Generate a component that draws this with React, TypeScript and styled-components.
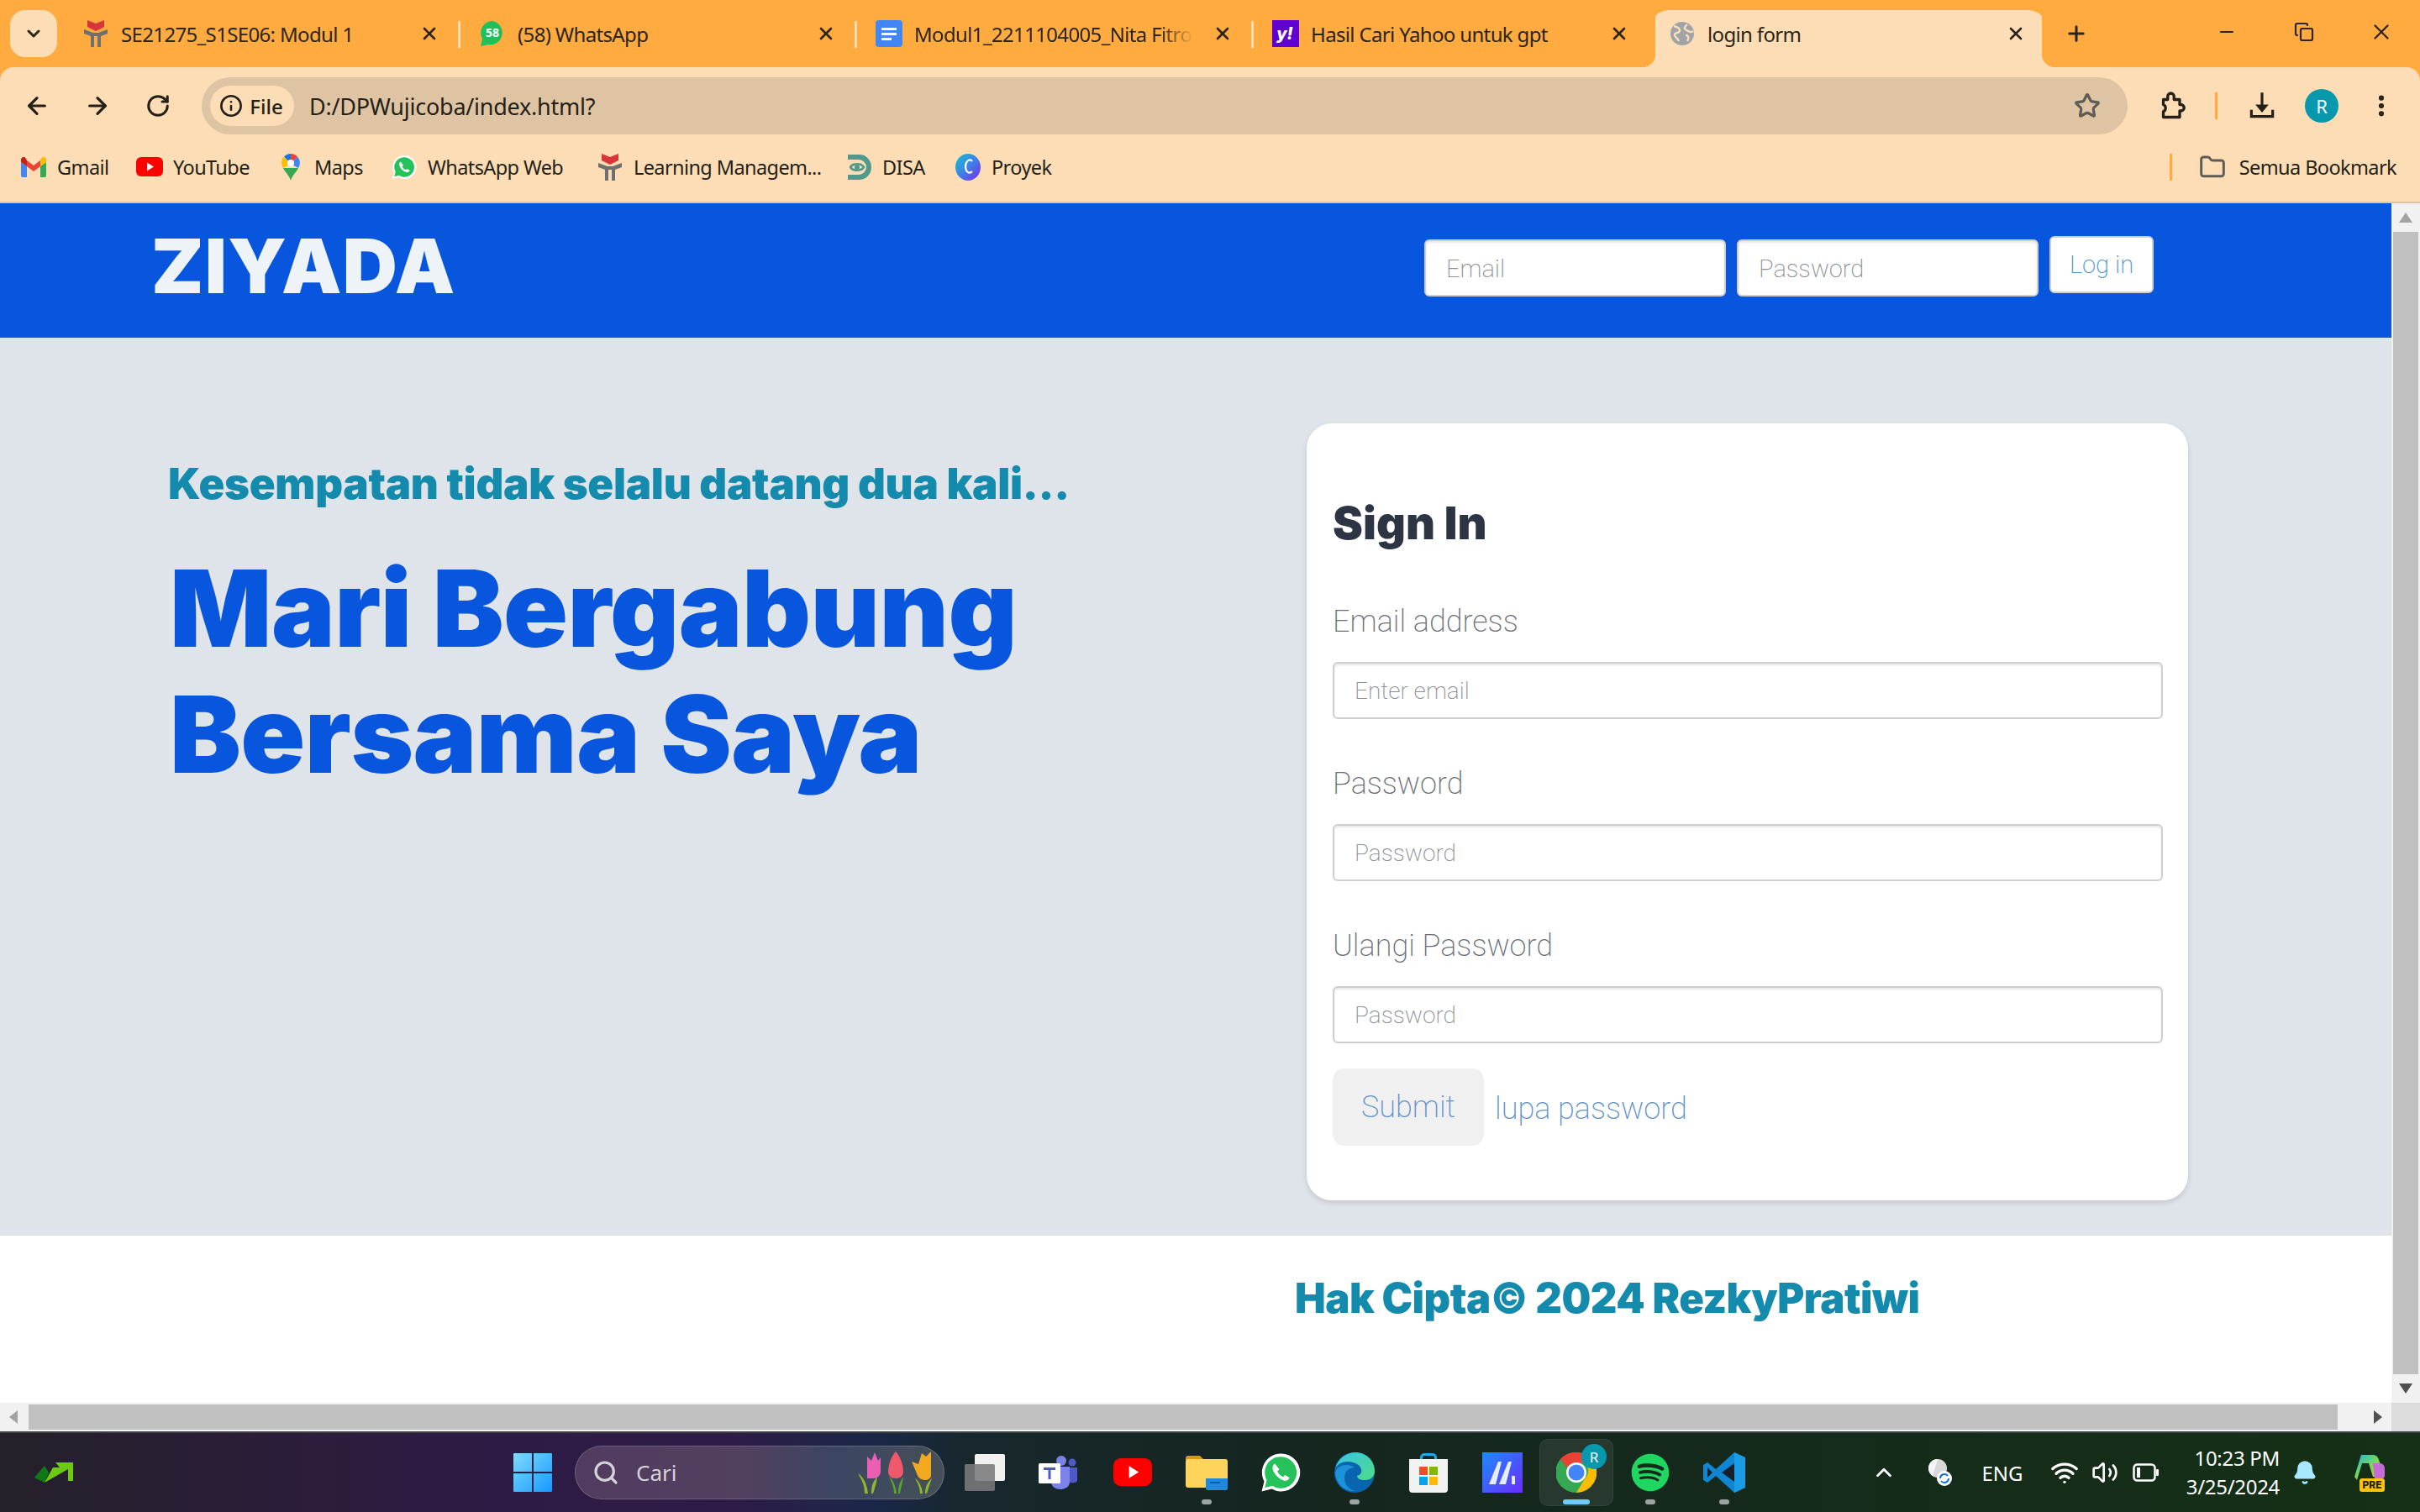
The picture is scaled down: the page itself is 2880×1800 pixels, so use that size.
import React from "react";
import styled, { createGlobalStyle } from "styled-components";
import {
  ArrowLeft, ArrowRight, RotateCw, Star, MoreVertical, Folder,
  X, Plus, Minus, ChevronDown, ChevronUp, Info, Search, Wifi, Volume2, Copy, Bell,
} from "lucide-react";
import { FaSpotify } from "react-icons/fa";

const Global = createGlobalStyle`
  html, body { margin: 0; padding: 0; background: #fff; }
  * { box-sizing: border-box; }
  #root { width: 2880px; height: 1800px; overflow: hidden; }
`;

const UI = `"Noto Sans", "Open Sans", sans-serif`;
const HEAD = `Inter, "Liberation Sans", sans-serif`;
const LIGHT = `Roboto, "Liberation Sans", sans-serif`;

const Screen = styled.div`
  width: 2880px;
  height: 1800px;
  display: flex;
  flex-direction: column;
  font-family: ${UI};
  background: #ffab40;
`;

/* browser tabs */
const TabStrip = styled.div`
  height: 80px;
  display: flex;
  align-items: flex-end;
  padding-left: 12px;
  background: #ffab40;
  color: #2b2418;
`;
const ChevronBtn = styled.div`
  width: 56px;
  height: 56px;
  margin: 0 8px 12px 0;
  border-radius: 18px;
  background: #fdddb5;
  display: flex;
  align-items: center;
  justify-content: center;
`;
const Tab = styled.div<{ $active?: boolean; $sep?: boolean }>`
  position: relative;
  width: 472px;
  height: 68px;
  padding: 0 0 12px 22px;
  display: flex;
  align-items: center;
  gap: 14px;
  font-size: 24px;
  ${(p) => p.$sep && `
    &::after {
      content: "";
      position: absolute;
      right: 0;
      top: 13px;
      width: 3px;
      height: 32px;
      background: #fdddb5;
    }
  `}
  ${(p) => p.$active && `
    margin: 0;
    background: linear-gradient(90deg, transparent 6px, #fdddb5 6px, #fdddb5 466px, transparent 466px);
    border-radius: 22px 22px 0 0;
    &::before {
      content: "";
      position: absolute;
      left: -10px;
      bottom: 0;
      width: 16px;
      height: 16px;
      background: radial-gradient(circle at 0 0, transparent 16px, #fdddb5 16.5px);
    }
    &::after {
      content: "";
      position: absolute;
      right: -10px;
      bottom: 0;
      width: 16px;
      height: 16px;
      background: radial-gradient(circle at 100% 0, transparent 16px, #fdddb5 16.5px);
    }
  `}
`;
const Favicon = styled.span`
  width: 32px;
  height: 32px;
  flex: none;
  display: flex;
  align-items: center;
  justify-content: center;
`;
const TabTitle = styled.span<{ $fade?: boolean }>`
  width: 332px;
  flex: none;
  white-space: nowrap;
  letter-spacing: -0.65px;
  ${(p) => p.$fade && `-webkit-mask-image: linear-gradient(90deg, #000 88%, transparent 100%);`}
`;
const TabClose = styled.span`
  width: 24px;
  height: 24px;
  flex: none;
  margin-left: 9px;
  display: flex;
  align-items: center;
  justify-content: center;
`;
const NewTab = styled.div`
  width: 48px;
  height: 56px;
  margin: 0 0 12px 11px;
  display: flex;
  align-items: center;
  justify-content: center;
`;
const WindowControls = styled.div`
  margin-left: auto;
  display: flex;
  height: 80px;
  align-items: center;
  padding-bottom: 4px;
`;
const WinBtn = styled.div`
  width: 92px;
  display: flex;
  justify-content: center;
`;

/* toolbar */
const Toolbar = styled.div`
  height: 92px;
  padding: 12px 0 12px 8px;
  display: flex;
  align-items: center;
  background: #fdddb5;
  border-radius: 16px 16px 0 0;
  color: #241f17;
`;
const ToolBtn = styled.div<{ $ml?: number; $w?: number }>`
  width: ${(p) => p.$w ?? 72}px;
  margin-left: ${(p) => p.$ml ?? 0}px;
  height: 56px;
  flex: none;
  display: flex;
  align-items: center;
  justify-content: center;
`;
const Omnibox = styled.div`
  width: 2292px;
  height: 68px;
  margin-left: 16px;
  border-radius: 34px;
  padding: 0 0 0 10px;
  background: #dec4a2;
  display: flex;
  align-items: center;
`;
const SiteChip = styled.div`
  width: 100px;
  height: 48px;
  border-radius: 24px;
  background: #fdddb5;
  display: flex;
  align-items: center;
  justify-content: center;
  gap: 8px;
  padding-right: 2px;
  font-size: 24px;
  font-weight: 500;
`;
const Url = styled.div`
  margin-left: 18px;
  font-size: 27px;
  letter-spacing: -0.25px;
`;
const StarSlot = styled.div`
  margin-left: auto;
  margin-right: 20px;
  width: 56px;
  display: flex;
  justify-content: center;
`;
const ToolSep = styled.div<{ $ml: number; $h: number }>`
  width: 3px;
  height: ${(p) => p.$h}px;
  margin-left: ${(p) => p.$ml}px;
  background: #ffab40;
  flex: none;
`;
const Avatar = styled.div<{ $size: number; $font: number }>`
  width: ${(p) => p.$size}px;
  height: ${(p) => p.$size}px;
  border-radius: 50%;
  background: #0798ae;
  color: #fff;
  display: flex;
  align-items: center;
  justify-content: center;
  font-size: ${(p) => p.$font}px;
`;

/* bookmarks */
const BookmarkBar = styled.div`
  height: 70px;
  padding: 0 0 14px 24px;
  display: flex;
  align-items: center;
  background: #fdddb5;
  font-size: 23.5px;
  color: #241f17;
  border-bottom: 2px solid #dec4a2;
`;
const Bookmark = styled.div<{ $w?: number; $gap?: number }>`
  width: ${(p) => (p.$w ? `${p.$w}px` : "auto")};
  flex: none;
  display: flex;
  align-items: center;
  gap: ${(p) => p.$gap ?? 12}px;
  white-space: nowrap;
  letter-spacing: -0.6px;
`;
const BookmarkRight = styled.div`
  margin-left: auto;
  display: flex;
  align-items: center;
  padding-right: 28px;
`;

/* the page in the viewport */
const Viewport = styled.div`
  height: 1462px;
  display: grid;
  grid-template-columns: 1fr 34px;
  grid-template-rows: 1428px 34px;
  background: #fff;
`;
const Page = styled.div`
  display: flex;
  flex-direction: column;
  min-width: 0;
`;
const Header = styled.header`
  height: 160px;
  flex: none;
  background: #0855de;
  display: flex;
  padding-left: 180px;
`;
const Logo = styled.div`
  font-family: ${HEAD};
  font-weight: 900;
  font-size: 90px;
  line-height: 160px;
  height: 160px;
  color: #eef3f7;
  letter-spacing: 1.3px;
  margin-top: -5px;
`;
const HeaderForm = styled.form`
  margin-left: auto;
  margin-right: 283px;
  display: flex;
  gap: 13px;
  padding-top: 43px;
`;
const baseInput = `
  border: 2px solid #cfcfcf;
  border-radius: 6px;
  background: #fff;
  box-shadow: inset 0 2px 3px rgba(0,0,0,.1);
  font-family: ${LIGHT};
  font-weight: 200;
  outline: none;
  &::placeholder { color: #8d9196; opacity: 1; }
`;
const HeaderInput = styled.input`
  ${baseInput}
  width: 359px;
  height: 68px;
  padding: 2px 24px 0;
  font-size: 29px;
`;
const HeaderButton = styled.button`
  width: 124px;
  height: 68px;
  margin-top: -4px;
  border: 2px solid #cfcfcf;
  border-radius: 6px;
  background: #fff;
  color: #4c93d0;
  font-family: ${LIGHT};
  font-weight: 200;
  font-size: 29px;
  padding: 0;
`;
const Main = styled.main`
  height: 1069px;
  flex: none;
  background: #dfe3ea;
  display: grid;
  grid-template-columns: 1555px 1049px;
  padding-top: 102px;
`;
const Hero = styled.div`
  padding: 37px 0 0 200px;
  font-family: ${HEAD};
`;
const HeroSub = styled.h3`
  margin: 0;
  font-size: 51px;
  line-height: 70px;
  font-weight: 900;
  color: #148bac;
  letter-spacing: -0.3px;
  white-space: nowrap;
`;
const HeroTitle = styled.h1`
  margin: 38px 0 0 2px;
  font-size: 127px;
  line-height: 150px;
  font-weight: 900;
  color: #0855de;
  letter-spacing: -0.5px;
`;
const Card = styled.form`
  height: 925px;
  background: #fff;
  border-radius: 30px;
  padding: 82px 31px 0;
  box-shadow: 0 3px 6px rgba(0, 0, 0, 0.12);
`;
const CardTitle = styled.h2`
  margin: 0 0 59px;
  font-family: ${HEAD};
  font-size: 54px;
  line-height: 74px;
  font-weight: 900;
  color: #2d3444;
`;
const Field = styled.div`
  margin-bottom: 56px;
`;
const FieldLabel = styled.label`
  display: block;
  font-family: ${LIGHT};
  font-weight: 200;
  font-size: 36px;
  line-height: 42px;
  color: #6c7076;
  margin-bottom: 27px;
`;
const FieldInput = styled.input`
  ${baseInput}
  display: block;
  width: 988px;
  height: 68px;
  padding: 0 24px;
  font-size: 28px;
`;
const Actions = styled.div`
  display: flex;
  align-items: center;
  gap: 13px;
  margin-top: -26px;
`;
const SubmitBtn = styled.button`
  width: 180px;
  height: 92px;
  border: none;
  border-radius: 14px;
  background: #f0f0f0;
  color: #5f93c9;
  font-family: ${LIGHT};
  font-weight: 200;
  font-size: 36px;
  padding: 0;
`;
const ForgotLink = styled.a`
  font-family: ${LIGHT};
  font-weight: 200;
  font-size: 36px;
  color: #5f93c9;
  padding-top: 4px;
`;
const Footer = styled.footer`
  flex: 1;
  background: #fff;
  padding: 40px 0 0 1541px;
`;
const FooterText = styled.h3`
  margin: 0;
  font-family: ${HEAD};
  font-size: 49px;
  line-height: 70px;
  font-weight: 900;
  color: #148bac;
  letter-spacing: -0.5px;
  white-space: nowrap;
`;
const VScroll = styled.div`
  background: #f1f1f1;
  display: flex;
  flex-direction: column;
  align-items: center;
`;
const ScrollArrow = styled.div`
  height: 34px;
  width: 100%;
  flex: none;
  display: flex;
  align-items: center;
  justify-content: center;
`;
const VThumb = styled.div`
  width: 30px;
  flex: 1;
  background: #c1c1c1;
`;
const HScroll = styled.div`
  background: #f1f1f1;
  display: flex;
  align-items: center;
`;
const HThumb = styled.div`
  height: 30px;
  flex: 1;
  background: #c1c1c1;
`;
const HArrow = styled.div<{ $w: number; $pl?: number }>`
  width: ${(p) => p.$w}px;
  padding-left: ${(p) => p.$pl ?? 0}px;
  flex: none;
  display: flex;
  justify-content: center;
`;
const ScrollCorner = styled.div`
  background: #dcdcdc;
`;

/* windows taskbar */
const Taskbar = styled.div`
  flex: 1;
  display: flex;
  align-items: center;
  color: #fff;
  background: linear-gradient(90deg, #252029 0, #2e1b45 20%, #2e1b47 30%, #1b2748 36%, #17272c 40%, #15261f 55%, #153016 100%);
  border-top: 2px solid #3e4246;
`;
const WidgetSlot = styled.div`
  width: 128px;
  flex: none;
  display: flex;
  justify-content: center;
`;
const StartSlot = styled.div`
  width: 88px;
  margin-left: 462px;
  flex: none;
  display: flex;
  justify-content: center;
`;
const SearchPill = styled.div`
  width: 440px;
  height: 64px;
  margin: 0 4px 0 6px;
  flex: none;
  border-radius: 32px;
  border: 1px solid rgba(255, 255, 255, 0.18);
  background: linear-gradient(90deg, #523b60, #52405f 45%, #3c4562 70%, #455058);
  display: flex;
  align-items: center;
  padding: 0 10px 0 20px;
  font-size: 26px;
  color: #d5d2da;
  gap: 20px;
`;
const Tulips = styled.svg`
  margin-left: auto;
`;
const AppSlot = styled.div<{ $run?: boolean; $active?: boolean }>`
  position: relative;
  width: 88px;
  height: 80px;
  flex: none;
  display: flex;
  align-items: center;
  justify-content: center;
  border-radius: 10px;
  ${(p) => p.$active && `background: rgba(255,255,255,.08); box-shadow: inset 0 0 0 1px rgba(255,255,255,.05);`}
  ${(p) => p.$run && `
    &::after {
      content: "";
      position: absolute;
      left: 38px;
      bottom: 2px;
      width: 12px;
      height: 6px;
      border-radius: 3px;
      background: #9ea3a3;
    }
  `}
  ${(p) => p.$active && `
    &::after {
      content: "";
      position: absolute;
      left: 28px;
      bottom: 2px;
      width: 32px;
      height: 6px;
      border-radius: 3px;
      background: #6fcdfa;
    }
  `}
`;
const ChromeBadge = styled.div`
  position: absolute;
  top: 6px;
  right: 8px;
`;
const Tray = styled.div`
  margin-left: auto;
  display: flex;
  align-items: center;
  padding-right: 19px;
  font-size: 24px;
`;
const TraySlot = styled.div<{ $w: number }>`
  width: ${(p) => p.$w}px;
  flex: none;
  display: flex;
  justify-content: center;
`;
const Clock = styled.div`
  width: 140px;
  text-align: right;
  line-height: 34px;
  letter-spacing: -0.3px;
`;

/* icons */
const TelkomIcon = () => (
  <svg width="28" height="32" viewBox="0 0 28 32">
    <path d="M4 0l10 4 10-4v8l-10 5L4 8z" fill="#d8343a" />
    <path d="M0 11l11 4h6l11-4v5l-8 3v13h-4V19h-4v13H8V19l-8-3z" fill="#6f6f6f" />
  </svg>
);
const WhatsBadge = () => (
  <svg width="30" height="32" viewBox="0 0 30 32">
    <path d="M15 1a14 14 0 0 0-12 21L1 31l9-2A14 14 0 1 0 15 1z" fill="#1fbf5b" />
    <text x="15" y="20" fontSize="14" fontWeight="700" fill="#fff" textAnchor="middle" fontFamily="Noto Sans">58</text>
  </svg>
);
const DocIcon = () => (
  <svg width="32" height="32" viewBox="0 0 32 32">
    <rect width="32" height="32" rx="4" fill="#4285f4" />
    <path d="M7 9h18v3H7zM7 15h18v3H7zM7 21h12v3H7z" fill="#fff" />
  </svg>
);
const YahooIcon = () => (
  <svg width="32" height="32" viewBox="0 0 32 32">
    <rect width="32" height="32" fill="#6001d2" />
    <text x="15" y="23" fontSize="20" fontWeight="800" fill="#fff" textAnchor="middle" fontFamily="Inter" fontStyle="italic">y!</text>
  </svg>
);
const GlobeIcon = () => (
  <svg width="28" height="28" viewBox="0 0 28 28">
    <circle cx="14" cy="14" r="14" fill="#a0a4a9" />
    <path d="M4 5c4 1 8 3 7 6s-5 1-6 4 4 4 5 8M20 3c-3 3-5 5-1 7s5 3 8 1M18 16c4 0 4 4 2 7" stroke="#fdddb5" strokeWidth="2.4" fill="none" />
  </svg>
);
const GmailIcon = () => (
  <svg width="30" height="24" viewBox="0 0 30 24">
    <path d="M2 24h5V11L0 6v16a2 2 0 0 0 2 2z" fill="#4285f4" />
    <path d="M23 24h5a2 2 0 0 0 2-2V6l-7 5z" fill="#34a853" />
    <path d="M23 4v7l7-5V3c0-2.500-3-4-5-2.500z" fill="#fbbc04" />
    <path d="M7 11V4l8 6 8-6v7l-8 6z" fill="#ea4335" />
    <path d="M0 3v3l7 5V4L5 .5C3-1 0 .5 0 3z" fill="#c5221f" />
  </svg>
);
const YoutubeIcon = ({ size = 32 }: { size?: number }) => (
  <svg width={size} height={size * 0.72} viewBox="0 0 32 23">
    <rect width="32" height="23" rx="6" fill="#ff0000" />
    <path d="M13 6.500l8 5-8 5z" fill="#fff" />
  </svg>
);
const MapsIcon = () => (
  <svg width="22" height="32" viewBox="0 0 22 32">
    <path d="M11 0a11 11 0 0 1 8 3.500L11 12z" fill="#ea4335" />
    <path d="M19 3.500A11 11 0 0 1 20 17L11 12z" fill="#4285f4" />
    <path d="M3 3.500A11 11 0 0 1 11 0v12z" fill="#1a73e8" />
    <path d="M3 3.500L11 12l-9 5A11 11 0 0 1 3 3.500z" fill="#fbbc04" />
    <path d="M2 17l18 0c-2 5-7 8-9 15-2-7-7-10-9-15z" fill="#34a853" />
    <circle cx="11" cy="11" r="4" fill="#fff" />
  </svg>
);
const WhatsRound = ({ size }: { size: number }) => (
  <svg width={size} height={size} viewBox="0 0 32 32">
    <path d="M16 1a15 15 0 0 0-13 22L1 31l8-2A15 15 0 1 0 16 1z" fill="#fff" />
    <path d="M16 3.500a12.500 12.500 0 0 0-11 18.500l-1.500 6 6-1.500A12.500 12.500 0 1 0 16 3.500z" fill="#25c15a" />
    <path d="M11.500 9c-1 .2-2 2-1.800 4 .3 3 4.800 8.500 9.300 9.500 2 .4 3.700-1 4-2.500l-3.500-2-1.500 1.500c-2-.6-4-3-4.500-4.500L15 13.500z" fill="#fff" />
  </svg>
);
const DisaIcon = () => (
  <svg width="30" height="30" viewBox="0 0 30 30">
    <path d="M2 0h14a14 15 0 0 1 0 30H2v-6h13a9 9 0 0 0 0-18H2z" fill="#4f9a8a" />
    <path d="M5 15c3-5 13-5 16 0-3 5-13 5-16 0z" fill="none" stroke="#4f9a8a" strokeWidth="2.500" />
    <circle cx="13" cy="15" r="3" fill="#4f9a8a" />
  </svg>
);
const ProyekIcon = () => (
  <svg width="30" height="32" viewBox="0 0 30 32">
    <defs>
      <linearGradient id="proyekGrad" x1="0" y1="0" x2="1" y2="1">
        <stop offset="0" stopColor="#10c5c9" />
        <stop offset=".5" stopColor="#3f80e8" />
        <stop offset="1" stopColor="#7d2ae8" />
      </linearGradient>
    </defs>
    <ellipse cx="15" cy="16" rx="15" ry="16" fill="url(#proyekGrad)" />
    <path d="M20 9c-3-4-8 0-8 6s4 10 8 6" fill="none" stroke="#fff" strokeWidth="2.200" />
  </svg>
);
const ExtensionIcon = () => (
  <svg width="36" height="36" viewBox="0 0 24 24" fill="none" stroke="#241f17" strokeWidth="2.200" strokeLinejoin="round">
    <path d="M5 7h3.500V4.500a2.500 2.500 0 0 1 5 0V7H18v4h1a2.500 2.500 0 0 1 0 5h-1v5H5v-4.500a3 3 0 0 0 0-5.500z" />
  </svg>
);
const DownloadIcon = () => (
  <svg width="38" height="38" viewBox="0 0 24 24" fill="#241f17">
    <path d="M11 2h2v9h4l-5 6-5-6h4z" />
    <path d="M3 15h2v4h14v-4h2v6H3z" />
  </svg>
);
const WidgetIcon = () => (
  <svg width="46" height="28" viewBox="0 0 46 28">
    <path d="M0 20L12 6l5 8L12 26z" fill="#0f7a15" />
    <path d="M12 26l10-18 8 0-5-6h21v22h-6V10z" fill="#6dcb0b" />
  </svg>
);
const StartIcon = () => (
  <svg width="46" height="46" viewBox="0 0 46 46">
    <defs>
      <linearGradient id="startGrad" x1="0" y1="0" x2="1" y2="1">
        <stop offset="0" stopColor="#7fdcfb" />
        <stop offset="1" stopColor="#1598ff" />
      </linearGradient>
    </defs>
    <path d="M0 1a1 1 0 0 1 1-1h21v22H0zM24 0h21a1 1 0 0 1 1 1v21H24zM0 24h22v22H1a1 1 0 0 1-1-1zM24 24h22v21a1 1 0 0 1-1 1H24z" fill="url(#startGrad)" />
  </svg>
);
const TaskViewIcon = () => (
  <svg width="48" height="44" viewBox="0 0 48 44">
    <rect x="12" y="0" width="36" height="32" rx="2" fill="#f1f1f1" />
    <rect x="0" y="12" width="36" height="32" rx="2" fill="#7a7a7a" fillOpacity=".88" />
  </svg>
);
const TeamsIcon = () => (
  <svg width="48" height="42" viewBox="0 0 48 42">
    <circle cx="27" cy="7" r="6" fill="#7b83eb" />
    <circle cx="40" cy="9" r="4.500" fill="#5059c9" />
    <path d="M33 15h13v15c0 4-6 4-13 2z" fill="#5059c9" />
    <path d="M15 14h22v18c0 12-22 12-22 0z" fill="#7b83eb" />
    <rect x="0" y="10" width="26" height="24" rx="1.500" fill="#fff" />
    <path d="M6 15h14v3h-5.500v11h-3V18H6z" fill="#5059c9" />
  </svg>
);
const FolderAppIcon = () => (
  <svg width="50" height="42" viewBox="0 0 50 42">
    <path d="M0 4a3 3 0 0 1 3-3h14l5 5H0z" fill="#d59a0e" />
    <rect y="5" width="50" height="34" rx="3" fill="#ffd45c" />
    <path d="M24 28h26v12a2 2 0 0 1-2 2H26a2 2 0 0 1-2-2z" fill="#1d8ae0" />
    <path d="M29 32h12v2H29z" fill="#0c5da8" />
  </svg>
);
const EdgeIcon = () => (
  <svg width="48" height="48" viewBox="0 0 48 48">
    <defs>
      <linearGradient id="edgeGrad" x1="0" y1="0" x2="1" y2="1">
        <stop offset="0" stopColor="#36c5e8" />
        <stop offset="1" stopColor="#4fdc85" />
      </linearGradient>
    </defs>
    <circle cx="24" cy="24" r="24" fill="#0a65b0" />
    <path d="M1 20C4 6 16 0 25 0c13 0 23 10 23 22 0 8-6 11-12 11-5 0-9-2-9-5 4-1 6-4 5-8C30 10 6 6 1 20z" fill="url(#edgeGrad)" />
    <path d="M24 18c-7 0-12 5-12 13 0 6 4 13 13 15C15 47 2 40 1 24 3 16 14 12 24 18z" fill="#1c93d8" />
  </svg>
);
const StoreIcon = () => (
  <svg width="46" height="48" viewBox="0 0 46 48">
    <path d="M13 9V6a5 5 0 0 1 5-5h10a5 5 0 0 1 5 5v3h-3V6a2 2 0 0 0-2-2H18a2 2 0 0 0-2 2v3z" fill="#1fa8e8" />
    <path d="M0 8h46v36a4 4 0 0 1-4 4H4a4 4 0 0 1-4-4z" fill="#f2f2f2" />
    <rect x="12" y="17" width="10" height="10" fill="#f25022" />
    <rect x="24" y="17" width="10" height="10" fill="#7fba00" />
    <rect x="12" y="29" width="10" height="10" fill="#00a4ef" />
    <rect x="24" y="29" width="10" height="10" fill="#ffb900" />
  </svg>
);
const MaxIcon = () => (
  <svg width="48" height="48" viewBox="0 0 48 48">
    <defs>
      <linearGradient id="maxGrad" x1="0" y1="0" x2="1" y2="1">
        <stop offset="0" stopColor="#1a8cff" />
        <stop offset="1" stopColor="#6b2cff" />
      </linearGradient>
    </defs>
    <rect width="48" height="48" fill="url(#maxGrad)" />
    <path d="M8 38L19 11h4L16 38zM20 38L31 11h4L28 38z" fill="#e8ecff" />
    <rect x="35" y="28" width="4" height="10" fill="#e8ecff" />
  </svg>
);
const ChromeIcon = () => (
  <svg width="48" height="48" viewBox="0 0 48 48">
    <circle cx="24" cy="24" r="24" fill="#34a853" />
    <path d="M24 0a24 24 0 0 1 21 12H24a12 12 0 0 0-11 7L5 8A24 24 0 0 1 24 0z" fill="#ea4335" />
    <path d="M45 12a24 24 0 0 1-21 36l11-18a12 12 0 0 0-2-18z" fill="#fbbc04" />
    <path d="M5 8l8 11a12 12 0 0 0 11 17l-4 11.500A24 24 0 0 1 5 8z" fill="#34a853" />
    <circle cx="24" cy="24" r="12" fill="#fff" />
    <circle cx="24" cy="24" r="9.500" fill="#4285f4" />
  </svg>
);
const VsCodeIcon = () => (
  <svg width="50" height="48" viewBox="0 0 50 48">
    <path d="M37 0l13 6v36l-13 6-22-20L5 36l-5-3V15l5-3 10 8z" fill="#0e86d4" />
    <path d="M37 0l13 6v36l-13 6z" fill="#1a9be6" />
    <path d="M37 13L22 24l15 11z" fill="#15202b" />
    <path d="M5 18v12l6-6z" fill="#15202b" />
  </svg>
);
const OneDriveIcon = () => (
  <svg width="30" height="34" viewBox="0 0 30 34">
    <circle cx="13" cy="12" r="11" fill="#d8d8d8" />
    <path d="M13 1a11 11 0 0 0-11 11c0 4 2 7 5 9z" fill="#f5f5f5" />
    <circle cx="21" cy="24" r="9" fill="#fff" />
    <path d="M16 24a5 5 0 0 1 9-3M26 24a5 5 0 0 1-9 3" stroke="#1874d0" strokeWidth="2" fill="none" />
  </svg>
);
const BatteryIcon = () => (
  <svg width="32" height="22" viewBox="0 0 32 22">
    <rect x="1.500" y="1.500" width="25" height="19" rx="4" fill="none" stroke="#fff" strokeWidth="2.500" />
    <rect x="5" y="5" width="4" height="12" fill="#fff" />
    <rect x="28" y="7" width="3" height="8" rx="1" fill="#fff" />
  </svg>
);
const CopilotIcon = () => (
  <svg width="46" height="46" viewBox="0 0 46 46">
    <defs>
      <linearGradient id="copilotGrad" x1="0" y1="0" x2="1" y2="1">
        <stop offset="0" stopColor="#1cb5e8" />
        <stop offset=".5" stopColor="#7fd94c" />
        <stop offset="1" stopColor="#f2c230" />
      </linearGradient>
    </defs>
    <path d="M8 28L16 2h14c3 0 6 2 7 6l7 20H30L25 12h-8l-6 20z" fill="url(#copilotGrad)" />
    <path d="M30 12h8c4 0 6 3 6 7v6c0 5-3 7-8 7h-4z" fill="#c56cd6" />
    <rect x="14" y="30" width="30" height="16" rx="3" fill="#ffc20e" />
    <text x="29" y="42" fontSize="12" fontWeight="800" fill="#222" textAnchor="middle" fontFamily="Inter">PRE</text>
  </svg>
);
const TulipsArt = () => (
  <Tulips width="94" height="50" viewBox="0 0 94 50">
    <path d="M10 50c0-12-5-18-8-24 6 4 10 10 12 24zM18 50c0-10 2-14 7-20-1 8-3 14-5 20z" fill="#8fb82a" />
    <path d="M13 32V6l5 5 4-10 4 10 3-4v17c0 5-5 8-8 8s-8-0-8-0z" fill="#ea5fb4" />
    <path d="M45 50c0-8-4-16-6-20 5 3 8 12 9 20zM50 50c0-8 2-14 6-20-1 8-3 14-4 20z" fill="#5aa62b" />
    <path d="M38 24c0-10 5-20 9-24 4 4 9 14 9 24 0 5-4 8-9 8s-9-3-9-8z" fill="#f0596c" />
    <path d="M76 50c0-8-4-14-6-18 5 3 8 10 9 18zM82 50c0-8 3-14 8-18-3 8-4 12-6 18z" fill="#8fb82a" />
    <path d="M66 12l8 3 4-13 5 4 6-6v28c0 4-4 6-7 6-6 0-9-4-10-8z" fill="#f3a91f" />
  </Tulips>
);

const bookmarks = [
  { icon: <GmailIcon />, label: "Gmail", w: 138 },
  { icon: <YoutubeIcon />, label: "YouTube", w: 168 },
  { icon: <MapsIcon />, label: "Maps", w: 135 },
  { icon: <WhatsRound size={30} />, label: "WhatsApp Web", w: 245 },
  { icon: <TelkomIcon />, label: "Learning Managem...", w: 296 },
  { icon: <DisaIcon />, label: "DISA", w: 130 },
  { icon: <ProyekIcon />, label: "Proyek", w: 0 },
];

const formFields = [
  { label: "Email address", placeholder: "Enter email", type: "email" },
  { label: "Password", placeholder: "Password", type: "password" },
  { label: "Ulangi Password", placeholder: "Password", type: "password" },
];

export default function App() {
  return (
    <Screen>
      <Global />
      <TabStrip>
        <ChevronBtn><ChevronDown size={24} strokeWidth={3} /></ChevronBtn>
        <Tab $sep>
          <Favicon><TelkomIcon /></Favicon>
          <TabTitle>SE21275_S1SE06: Modul 1</TabTitle>
          <TabClose><X size={24} strokeWidth={2.6} /></TabClose>
        </Tab>
        <Tab $sep>
          <Favicon><WhatsBadge /></Favicon>
          <TabTitle>(58) WhatsApp</TabTitle>
          <TabClose><X size={24} strokeWidth={2.6} /></TabClose>
        </Tab>
        <Tab $sep>
          <Favicon><DocIcon /></Favicon>
          <TabTitle $fade>Modul1_2211104005_Nita Fitro</TabTitle>
          <TabClose><X size={24} strokeWidth={2.6} /></TabClose>
        </Tab>
        <Tab>
          <Favicon><YahooIcon /></Favicon>
          <TabTitle>Hasil Cari Yahoo untuk gpt</TabTitle>
          <TabClose><X size={24} strokeWidth={2.6} /></TabClose>
        </Tab>
        <Tab $active>
          <Favicon><GlobeIcon /></Favicon>
          <TabTitle>login form</TabTitle>
          <TabClose><X size={24} strokeWidth={2.6} /></TabClose>
        </Tab>
        <NewTab><Plus size={28} strokeWidth={2.6} /></NewTab>
        <WindowControls>
          <WinBtn><Minus size={24} strokeWidth={2} /></WinBtn>
          <WinBtn><Copy size={24} strokeWidth={2.2} /></WinBtn>
          <WinBtn><X size={30} strokeWidth={1.8} /></WinBtn>
        </WindowControls>
      </TabStrip>

      <Toolbar>
        <ToolBtn><ArrowLeft size={32} strokeWidth={2.4} /></ToolBtn>
        <ToolBtn><ArrowRight size={32} strokeWidth={2.4} /></ToolBtn>
        <ToolBtn><RotateCw size={30} strokeWidth={2.4} /></ToolBtn>
        <Omnibox>
          <SiteChip><Info size={28} strokeWidth={2.2} />File</SiteChip>
          <Url>D:/DPWujicoba/index.html?</Url>
          <StarSlot><Star size={32} strokeWidth={2.4} color="#5f5b55" /></StarSlot>
        </Omnibox>
        <ToolBtn $ml={17}><ExtensionIcon /></ToolBtn>
        <ToolSep $ml={15} $h={32} />
        <ToolBtn $ml={17}><DownloadIcon /></ToolBtn>
        <ToolBtn $w={70}><Avatar $size={40} $font={22}>R</Avatar></ToolBtn>
        <ToolBtn><MoreVertical size={32} strokeWidth={2.6} /></ToolBtn>
      </Toolbar>

      <BookmarkBar>
        {bookmarks.map((b) => (
          <Bookmark key={b.label} $w={b.w || undefined}>
            <Favicon>{b.icon}</Favicon>
            {b.label}
          </Bookmark>
        ))}
        <BookmarkRight>
          <ToolSep $ml={0} $h={32} />
          <Bookmark $gap={16}>
            <ToolBtn $ml={32} $w={32}><Folder size={34} strokeWidth={2.2} color="#5f5b55" /></ToolBtn>
            Semua Bookmark
          </Bookmark>
        </BookmarkRight>
      </BookmarkBar>

      <Viewport>
        <Page>
          <Header>
            <Logo>ZIYADA</Logo>
            <HeaderForm>
              <HeaderInput placeholder="Email" />
              <HeaderInput placeholder="Password" type="password" />
              <HeaderButton type="button">Log in</HeaderButton>
            </HeaderForm>
          </Header>
          <Main>
            <Hero>
              <HeroSub>Kesempatan tidak selalu datang dua kali...</HeroSub>
              <HeroTitle>Mari Bergabung<br />Bersama Saya</HeroTitle>
            </Hero>
            <Card>
              <CardTitle>Sign In</CardTitle>
              {formFields.map((f) => (
                <Field key={f.label}>
                  <FieldLabel>{f.label}</FieldLabel>
                  <FieldInput placeholder={f.placeholder} type={f.type} />
                </Field>
              ))}
              <Actions>
                <SubmitBtn type="button">Submit</SubmitBtn>
                <ForgotLink>lupa password</ForgotLink>
              </Actions>
            </Card>
          </Main>
          <Footer>
            <FooterText>Hak Cipta© 2024 RezkyPratiwi</FooterText>
          </Footer>
        </Page>
        <VScroll>
          <ScrollArrow><svg width="18" height="14" viewBox="0 0 18 14"><path d="M9 1l8 12H1z" fill="#a3a3a3" /></svg></ScrollArrow>
          <VThumb />
          <ScrollArrow><svg width="18" height="14" viewBox="0 0 18 14"><path d="M9 13L1 1h16z" fill="#505050" /></svg></ScrollArrow>
        </VScroll>
        <HScroll>
          <HArrow $w={34}><svg width="14" height="18" viewBox="0 0 14 18"><path d="M1 9l10-8v16z" fill="#a3a3a3" /></svg></HArrow>
          <HThumb />
          <HArrow $w={64} $pl={30}><svg width="14" height="18" viewBox="0 0 14 18"><path d="M13 9L3 1v16z" fill="#505050" /></svg></HArrow>
        </HScroll>
        <ScrollCorner />
      </Viewport>

      <Taskbar>
        <WidgetSlot><WidgetIcon /></WidgetSlot>
        <StartSlot><StartIcon /></StartSlot>
        <SearchPill>
          <Search size={32} strokeWidth={2.4} />
          Cari
          <TulipsArt />
        </SearchPill>
        <AppSlot><TaskViewIcon /></AppSlot>
        <AppSlot><TeamsIcon /></AppSlot>
        <AppSlot><YoutubeIcon size={46} /></AppSlot>
        <AppSlot $run><FolderAppIcon /></AppSlot>
        <AppSlot><WhatsRound size={48} /></AppSlot>
        <AppSlot $run><EdgeIcon /></AppSlot>
        <AppSlot><StoreIcon /></AppSlot>
        <AppSlot><MaxIcon /></AppSlot>
        <AppSlot $active>
          <ChromeIcon />
          <ChromeBadge><Avatar $size={30} $font={17}>R</Avatar></ChromeBadge>
        </AppSlot>
        <AppSlot $run><FaSpotify size={46} color="#1ed760" /></AppSlot>
        <AppSlot $run><VsCodeIcon /></AppSlot>
        <Tray>
          <TraySlot $w={94}><ChevronUp size={30} strokeWidth={2.2} /></TraySlot>
          <TraySlot $w={38}><OneDriveIcon /></TraySlot>
          <TraySlot $w={112}>ENG</TraySlot>
          <TraySlot $w={36}><Wifi size={34} strokeWidth={2.4} /></TraySlot>
          <TraySlot $w={60}><Volume2 size={32} strokeWidth={2} /></TraySlot>
          <TraySlot $w={38}><BatteryIcon /></TraySlot>
          <Clock>10:23 PM<br />3/25/2024</Clock>
          <TraySlot $w={60}><Bell size={30} fill="#a6e8ff" color="#a6e8ff" /></TraySlot>
          <TraySlot $w={88}><CopilotIcon /></TraySlot>
        </Tray>
      </Taskbar>
    </Screen>
  );
}
